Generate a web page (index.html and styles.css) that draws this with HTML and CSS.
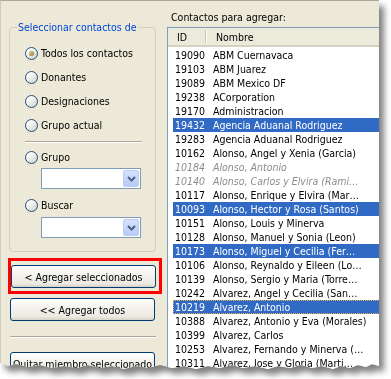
FILE: index.html
```html
<!DOCTYPE html>
<html lang="es">
<head>
    <meta charset="UTF-8">
    <title>Agregar contactos</title>
    <link rel="stylesheet" href="styles.css">
</head>
<body>
    <div class="frame">
        <div class="window">
            <!-- columna izquierda -->
            <div class="left">
                <fieldset class="source">
                    <legend>Seleccionar contactos de</legend>
                    <label class="opt first"><span class="radio checked"></span>Todos los contactos</label>
                    <label class="opt"><span class="radio"></span>Donantes</label>
                    <label class="opt"><span class="radio"></span>Designaciones</label>
                    <label class="opt"><span class="radio"></span>Grupo actual</label>
                    <div class="sep"></div>
                    <label class="opt grupo"><span class="radio"></span>Grupo</label>
                    <div class="combo">
                        <span class="drop"><svg width="9" height="6" viewBox="0 0 9 6"><path d="M1 1 L4.5 4.5 L8 1" fill="none" stroke="#4d6185" stroke-width="2"/></svg></span>
                    </div>
                    <label class="opt buscar"><span class="radio"></span>Buscar</label>
                    <div class="combo combo2">
                        <span class="drop"><svg width="9" height="6" viewBox="0 0 9 6"><path d="M1 1 L4.5 4.5 L8 1" fill="none" stroke="#4d6185" stroke-width="2"/></svg></span>
                    </div>
                </fieldset>

                <div class="highlight">
                    <button class="btn">&lt; Agregar seleccionados</button>
                </div>
                <button class="btn btn-all">&lt;&lt; Agregar todos</button>
                <div class="sep sep-wide"></div>
                <button class="btn btn-remove">Quitar miembro seleccionado</button>
            </div>

            <!-- lista de contactos -->
            <div class="right">
                <div class="caption">Contactos para agregar:</div>
                <div class="list">
                    <div class="list-head">
                        <span class="h-id">ID</span>
                        <span class="h-div"></span>
                        <span class="h-name">Nombre</span>
                    </div>
                    <ul class="rows">
                        <li><span class="id">19090</span>ABM Cuernavaca</li>
                        <li><span class="id">19103</span>ABM Juarez</li>
                        <li><span class="id">19089</span>ABM Mexico DF</li>
                        <li><span class="id">19238</span>ACorporation</li>
                        <li><span class="id">19170</span>Administracion</li>
                        <li class="sel"><span class="id">19432</span>Agencia Aduanal Rodriguez</li>
                        <li><span class="id">19283</span>Agencia Aduanal Rodriguez</li>
                        <li><span class="id">10162</span>Alonso, Angel y Xenia (Garcia)</li>
                        <li class="off"><span class="id">10184</span>Alonso, Antonio</li>
                        <li class="off"><span class="id">10140</span>Alonso, Carlos y Elvira (Rami…</li>
                        <li><span class="id">10117</span>Alonso, Enrique y Elvira (Mar…</li>
                        <li class="sel"><span class="id">10093</span>Alonso, Hector y Rosa (Santos)</li>
                        <li><span class="id">10151</span>Alonso, Louis y Minerva</li>
                        <li><span class="id">10128</span>Alonso, Manuel y Sonia (Leon)</li>
                        <li class="sel"><span class="id">10173</span>Alonso, Miguel y Cecilia (Fer…</li>
                        <li><span class="id">10106</span>Alonso, Reynaldo y Eileen (Lo…</li>
                        <li><span class="id">10139</span>Alonso, Sergio y Maria (Torre…</li>
                        <li><span class="id">10242</span>Alvarez, Angel y Cecilia (San…</li>
                        <li class="sel focus"><span class="id">10219</span>Alvarez, Antonio</li>
                        <li><span class="id">10388</span>Alvarez, Antonio y Eva (Morales)</li>
                        <li><span class="id">10399</span>Alvarez, Carlos</li>
                        <li><span class="id">10253</span>Alvarez, Fernando y Minerva (…</li>
                        <li><span class="id">10311</span>Alvarez, Jose y Gloria (Marti…</li>
                    </ul>
                </div>
            </div>
        </div>
    </div>
</body>
</html>
```

FILE: styles.css
```css
*{
    margin: 0;
    padding: 0;
    box-sizing: border-box;
}

body{
    background: #fff;
    font-family: "DejaVu Sans Condensed", "DejaVu Sans", sans-serif;
    font-size: 10.5px;
    color: #000;
}

/* sombra + borde rasgado */
.frame{
    width: 391px;
    height: 379px;
    filter: drop-shadow(5px 6px 3px rgba(0,0,0,0.5));
}

.window{
    width: 379px;
    height: 372px;
    background: #ece9d8;
    border-top: 1px solid #aca899;
    border-left: 1px solid #cfccbb;
    display: flex;
    overflow: hidden;
    clip-path: polygon(0 0, 379px 0, 379px 366px, 372px 364px, 366px 367px, 358px 365px, 350px 368px, 341px 366px, 333px 369px, 322px 366px, 312px 368px, 301px 365px, 290px 368px, 278px 366px, 268px 369px, 255px 366px, 243px 368px, 232px 365px, 220px 368px, 208px 366px, 196px 369px, 184px 366px, 172px 368px, 160px 365px, 148px 368px, 136px 366px, 124px 369px, 112px 366px, 100px 368px, 88px 365px, 76px 368px, 64px 366px, 52px 368px, 40px 365px, 28px 367px, 16px 364px, 8px 366px, 0 363px);
}

.left{
    width: 165px;
    flex: none;
    padding: 0 10px 0 8px;
}

.source{
    margin-top: 20px;
    height: 231px;
    border: 1px solid #d0d0bf;
    border-radius: 4px;
    padding: 0 7px;
}

.source legend{
    color: #0046d5;
    line-height: 13px;
    padding: 0 1px;
}

.opt{
    display: flex;
    align-items: center;
    height: 14px;
    margin-top: 10px;
    margin-left: 8px;
    white-space: nowrap;
}

.opt.first{
    margin-top: 12px;
}

.radio{
    width: 13px;
    height: 13px;
    border: 1px solid #1c5180;
    border-radius: 50%;
    background: linear-gradient(135deg, #ffffff 20%, #e6e6e0 60%, #cfcfc6);
    margin-right: 3px;
    flex: none;
    display: flex;
    align-items: center;
    justify-content: center;
}

.radio.checked::after{
    content: "";
    width: 5px;
    height: 5px;
    border-radius: 50%;
    background: radial-gradient(circle at 35% 35%, #d8c27a, #8a7430);
}

.sep{
    height: 2px;
    border-top: 1px solid #aca899;
    border-bottom: 1px solid #fff;
    margin: 9px 6px 0 8px;
}

.opt.grupo{
    margin-top: 7px;
}

.opt.buscar{
    margin-top: 9px;
}

.combo{
    width: 100px;
    height: 21px;
    margin: 4px 0 0 24px;
    background: #fff;
    border: 1px solid #7f9db9;
    display: flex;
    justify-content: flex-end;
    padding: 1px;
}

.combo2{
    margin-top: 5px;
}

.drop{
    width: 16px;
    height: 17px;
    border: 1px solid #b9cdf6;
    border-radius: 2px;
    background: linear-gradient(#d6e2fd, #b7cbf7);
    display: flex;
    align-items: center;
    justify-content: center;
}

.btn{
    display: block;
    width: 145px;
    height: 23px;
    border: 1px solid #003c74;
    border-radius: 3px;
    background: linear-gradient(#ffffff, #f4f3ee 40%, #ebe9e1 85%, #d6d0c5);
    font-family: inherit;
    font-size: inherit;
    color: #000;
    text-align: center;
    white-space: nowrap;
    overflow: hidden;
}

.highlight{
    margin: 6px -6px 0 -1px;
    border: 3px solid #ff0000;
    padding: 4px 3px 3px 0;
}

.btn-all{
    margin-top: 4px;
    margin-left: 1px;
}

.sep-wide{
    margin: 15px 0 0 1px;
}

.btn-remove{
    margin-top: 14px;
    margin-left: 1px;
}

.right{
    flex: none;
    width: 240px;
    padding-top: 10px;
    margin-left: 1px;
}

.caption{
    line-height: 13px;
    padding-left: 4px;
    margin-bottom: 3px;
}

.list{
    border: 1px solid #7f9db9;
    background: #fff;
    height: 400px;
}

.list-head{
    height: 19px;
    background: #ebeadb;
    border-bottom: 2px solid #d6d2c2;
    display: flex;
    align-items: center;
}

.h-id{
    padding-left: 9px;
    width: 37px;
}

.h-div{
    width: 1px;
    height: 13px;
    background: #c7c5b2;
    border-right: 1px solid #fff;
    box-sizing: content-box;
}

.h-name{
    padding-left: 9px;
}

.rows{
    list-style: none;
    padding: 1px 0 0 5px;
}

.rows li{
    height: 14px;
    line-height: 14px;
    white-space: nowrap;
    padding-left: 2px;
}

.rows .id{
    display: inline-block;
    width: 38px;
}

.rows li.sel{
    background: #316ac5;
    color: #fff;
}

.rows li.focus{
    outline: 1px dotted #e8b04a;
    outline-offset: -1px;
}

.rows li.off{
    color: #8c8c8c;
    font-style: italic;
}
```
